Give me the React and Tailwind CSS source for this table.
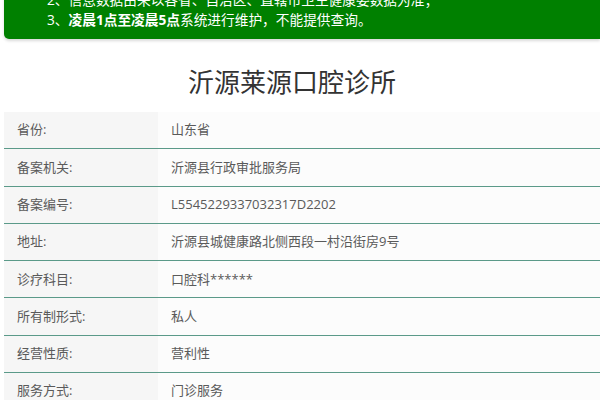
export default function App() {
  const rows = [
    ["省份:", "山东省"],
    ["备案机关:", "沂源县行政审批服务局"],
    ["备案编号:", "L5545229337032317D2202"],
    ["地址:", "沂源县城健康路北侧西段一村沿街房9号"],
    ["诊疗科目:", "口腔科******"],
    ["所有制形式:", "私人"],
    ["经营性质:", "营利性"],
    ["服务方式:", "门诊服务"],
  ];
  return (
    <div
      className="w-[600px] h-[400px] overflow-hidden bg-white"
      style={{ fontFamily: '"Open Sans", "Noto Sans CJK SC", sans-serif' }}
    >
      <div className="ml-1 mt-[-40px] bg-[#008000] rounded-bl-[5px] pt-[10px] pb-[9px] pl-[43px] text-white text-[13.7px] leading-[20px] shadow-[0_2px_3px_rgba(0,0,0,0.15)]">
        <div>1、本查询系统数据仅供参考，具体以当地卫生健康部门公布为准；</div>
        <div>2、信息数据由来以各省、自治区、直辖市卫生健康委数据为准；</div>
        <div>3、<b>凌晨1点至凌晨5点</b>系统进行维护，不能提供查询。</div>
      </div>
      <div className="mt-[24px] text-center text-[26px] leading-[38px] text-[#333] pr-[16px]">
        沂源莱源口腔诊所
      </div>
      <div className="mt-[11px] ml-1">
        {rows.map(([k, v], i) => (
          <div
            key={i}
            className="flex h-[37.3px] border-b border-[#5b9a89] shadow-[0_1px_0_#d6e8e3] text-[13px] text-[#5a5a5a]"
          >
            <div className="w-[154px] bg-[#f6f6f6] pl-[13px] flex items-center">{k}</div>
            <div className="flex-1 bg-[#fcfcfc] pl-[13px] flex items-center">{v}</div>
          </div>
        ))}
      </div>
    </div>
  );
}
